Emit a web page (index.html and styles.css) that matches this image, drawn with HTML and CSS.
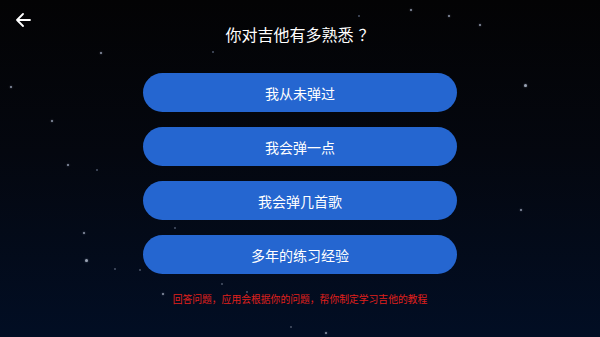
FILE: index.html
```html
<!DOCTYPE html>
<html lang="zh-CN">
<head>
  <meta charset="UTF-8">
  <meta name="viewport" content="width=device-width, initial-scale=1.0">
  <title>吉他熟悉程度</title>
  <link rel="stylesheet" href="styles.css">
</head>
<body>
  <div class="screen">
    <!-- background stars -->
    <div class="stars">
      <span class="star" style="left:100px;top:52px"></span>
      <span class="star" style="left:410px;top:9px"></span>
      <span class="star" style="left:448px;top:15px"></span>
      <span class="star" style="left:479px;top:24px"></span>
      <span class="star big" style="left:524px;top:84px"></span>
      <span class="star" style="left:10px;top:86px"></span>
      <span class="star" style="left:51px;top:120px"></span>
      <span class="star" style="left:67px;top:164px"></span>
      <span class="star dim" style="left:96px;top:169px"></span>
      <span class="star" style="left:83px;top:232px"></span>
      <span class="star big" style="left:85px;top:259px"></span>
      <span class="star dim" style="left:114px;top:268px"></span>
      <span class="star dim" style="left:139px;top:269px"></span>
      <span class="star" style="left:520px;top:209px"></span>
      <span class="star dim" style="left:358px;top:15px"></span>
      <span class="star dim" style="left:212px;top:51px"></span>
      <span class="star dim" style="left:174px;top:227px"></span>
      <span class="star" style="left:162px;top:293px"></span>
      <span class="star dim" style="left:221px;top:283px"></span>
      <span class="star dim" style="left:246px;top:291px"></span>
      <span class="star" style="left:325px;top:332px"></span>
      <span class="star dim" style="left:290px;top:326px"></span>
      <span class="star dim" style="left:245px;top:245px"></span>
      <span class="star dim" style="left:410px;top:265px"></span>
    </div>

    <header class="topbar">
      <button class="back-btn" type="button" aria-label="返回">
        <svg width="16" height="14" viewBox="0 0 16 14">
          <path d="M15 7H2M8 1L2 7l6 6" fill="none" stroke="#fff" stroke-width="1.8" stroke-linecap="round" stroke-linejoin="round"/>
        </svg>
      </button>
      <h1 class="title">你对吉他有多熟悉<span class="qmark">？</span></h1>
      <span></span>
    </header>

    <div class="options">
      <button class="option" type="button">我从未弹过</button>
      <button class="option" type="button">我会弹一点</button>
      <button class="option" type="button">我会弹几首歌</button>
      <button class="option" type="button">多年的练习经验</button>
    </div>

    <p class="note">回答问题，应用会根据你的问题，帮你制定学习吉他的教程</p>
  </div>
</body>
</html>
```

FILE: styles.css
```css
body {
  margin: 0;
  padding: 0;
  font-family: "Noto Sans CJK SC", "Noto Sans", sans-serif;
}

.screen {
  position: relative;
  width: 600px;
  height: 337px;
  overflow: hidden;
  display: flex;
  flex-direction: column;
  align-items: center;
  background: linear-gradient(to bottom, #030304 0%, #04070f 45%, #020e24 100%);
}

.stars {
  position: absolute;
  inset: 0;
  pointer-events: none;
}

.star {
  position: absolute;
  width: 2px;
  height: 2px;
  border-radius: 50%;
  background: #8a93a6;
  box-shadow: 0 0 2px rgba(160, 170, 190, 0.6);
}

.star.big {
  width: 3px;
  height: 3px;
  background: #9aa3b4;
}

.star.dim {
  background: #4b5468;
  box-shadow: none;
}

.topbar {
  position: relative;
  width: 100%;
  box-sizing: border-box;
  display: grid;
  grid-template-columns: 1fr auto 1fr;
  align-items: start;
  padding: 13px 15px 0;
}

.back-btn {
  justify-self: start;
  background: none;
  border: none;
  padding: 0;
  width: 16px;
  height: 14px;
  cursor: pointer;
  display: flex;
}

.title {
  margin: 11px 0 0;
  font-size: 16px;
  line-height: 20px;
  font-weight: 400;
  color: #fff;
}

.qmark {
  padding-left: 5px;
}

.options {
  position: relative;
  display: flex;
  flex-direction: column;
  gap: 15px;
  margin-top: 29px;
}

.option {
  width: 314px;
  height: 39px;
  border: none;
  border-radius: 20px;
  background: #2566d0;
  color: #fff;
  font-family: inherit;
  font-size: 14px;
  cursor: pointer;
}

.note {
  position: relative;
  margin: 18px 0 0;
  font-size: 9.8px;
  line-height: 14px;
  color: #e0201c;
}
```
